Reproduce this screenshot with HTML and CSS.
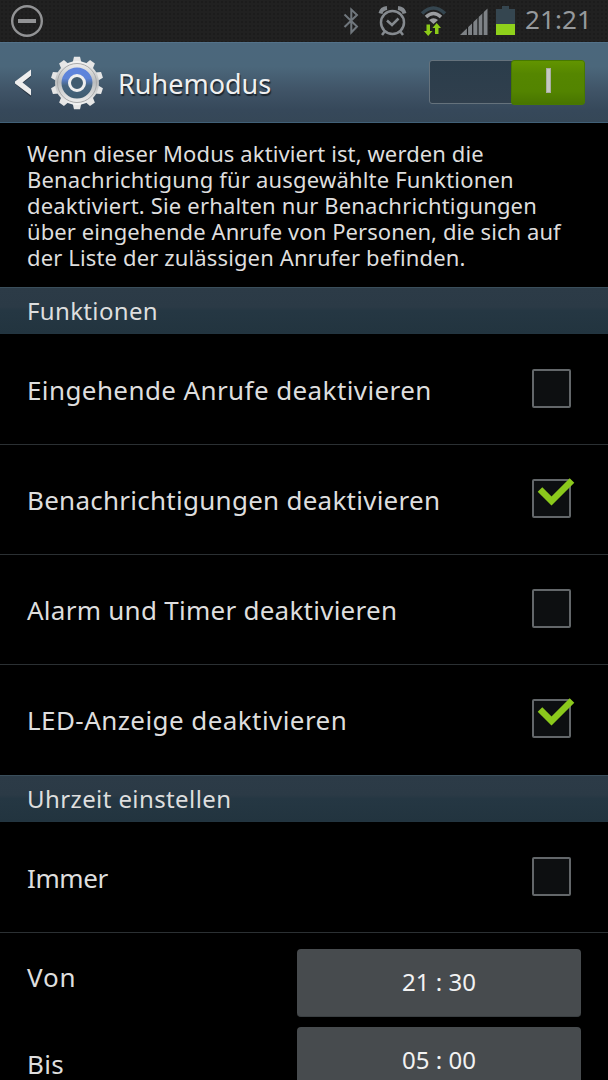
FILE: index.html
```html
<!DOCTYPE html>
<html lang="de">
<head>
<meta charset="utf-8">
<title>Ruhemodus</title>
<link rel="stylesheet" href="styles.css">
</head>
<body>
<div class="screen">
  <div class="status">
    <svg class="quiet" width="34" height="34" viewBox="0 0 34 34"><circle cx="17" cy="17" r="14.8" fill="none" stroke="#929395" stroke-width="2.4"/><path d="M8 17h18" stroke="#929395" stroke-width="4"/></svg>
    <svg class="indicators" width="190" height="42" viewBox="334 0 190 42">
      <path d="M344.500 14.500L357 26.500L351.300 32.500V9.500L357 15L344.500 27" fill="none" stroke="#70777d" stroke-width="2"/>
      <g fill="none" stroke="#858a8f" stroke-width="2.500">
        <circle cx="392.500" cy="22.500" r="11.500"/><path d="M387 20.500l5 4.500 6.500-6.500M385 31l-3 4M400 31l3 4"/>
        <path d="M380.500 13.500q1-5 6.500-5.500M398 8q5.500.5 6.500 5.500" stroke-width="4"/>
      </g>
      <path d="M422 13.500Q433.500 2.500 445 13.500" fill="none" stroke="#354650" stroke-width="3.500"/>
      <path d="M426 17Q433.500 10 441 17" fill="none" stroke="#9b9da0" stroke-width="3.500"/>
      <path d="M429 20Q433.500 16.500 438 20L433.500 24Z" fill="#9b9da0"/>
      <path d="M426.500 24.500h3.500V31h2.500l-4.300 5-4.300-5h2.600zM435 34h3.500v-6h2.500l-4.300-5-4.300 5h2.600z" fill="#8ccb18"/>
      <path d="M460 35L487.500 8.500V35Z" fill="#7e8286"/>
      <path d="M467.500 27V35M472.700 22V35M478 17V35M483 12V35" stroke="#151617" stroke-width="1.200"/>
      <path d="M496 9h6V6h7v3h6v15h-19z" fill="#354650"/><path d="M496 24h19v11h-19z" fill="#8fd11b"/>
    </svg>
    <span class="clock">21:21</span>
  </div>
  <header class="bar">
    <svg class="back" width="18" height="28" viewBox="0 0 18 28"><path d="M16 2.500V8L7 14.500L16 21.500V28L0 15V13.500Z" fill="#151d24" opacity=".6"/><path d="M16 .5V6.800L7.500 13.500L16 20.200V26.500L0 14.500V12.500Z" fill="#eee"/></svg>
    <svg class="gear" width="54" height="56" viewBox="-27 -28 54 56">
      <defs>
        <linearGradient id="steel" x2="0" y2="1"><stop stop-color="#f4f4f4"/><stop offset=".48" stop-color="#bbbdbe"/><stop offset="1" stop-color="#f3f3f3"/></linearGradient>
        <linearGradient id="blue" x2="0" y2="1"><stop stop-color="#5e84df"/><stop offset=".35" stop-color="#5e84d8"/><stop offset=".58" stop-color="#476580"/><stop offset="1" stop-color="#3f5c70"/></linearGradient>
        <path id="tooth" d="M-4.500-20L-3-26.300H3L4.500-20Z"/>
      </defs>
      <g fill="#e6e6e6">
        <use href="#tooth"/><use href="#tooth" transform="rotate(36)"/><use href="#tooth" transform="rotate(72)"/><use href="#tooth" transform="rotate(108)"/><use href="#tooth" transform="rotate(144)"/><use href="#tooth" transform="rotate(180)"/><use href="#tooth" transform="rotate(216)"/><use href="#tooth" transform="rotate(252)"/><use href="#tooth" transform="rotate(288)"/><use href="#tooth" transform="rotate(324)"/>
      </g>
      <circle r="22" fill="url(#steel)"/><circle r="19.500" fill="none" stroke="#a9aaab" stroke-width="1"/>
      <circle r="15.500" fill="url(#blue)"/><circle r="7.500" fill="#415c70" stroke="#eee" stroke-width="3"/>
    </svg>
    <h1 class="title"><span>Ruhemodus</span></h1>
    <div class="switch"><div class="thumb"><i></i></div></div>
  </header>
  <p class="intro">
    <span class="l1">Wenn dieser Modus aktiviert ist, werden die</span>
    <span class="l2">Benachrichtigung für ausgewählte Funktionen</span>
    <span class="l3">deaktiviert. Sie erhalten nur Benachrichtigungen</span>
    <span class="l4">über eingehende Anrufe von Personen, die sich auf</span>
    <span class="l5">der Liste der zulässigen Anrufer befinden.</span>
  </p>
  <h2 class="section"><span class="functions">Funktionen</span></h2>
  <div class="row"><span class="calls">Eingehende Anrufe deaktivieren</span><div class="box"></div></div>
  <div class="row"><span class="notes">Benachrichtigungen deaktivieren</span><div class="box"><svg class="tick" width="44" height="32" viewBox="0 0 44 32"><path d="M8 12.500L19.500 24L40 3.500" fill="none" stroke="#8bc91c" stroke-width="6.500"/></svg></div></div>
  <div class="row"><span class="alarm">Alarm und Timer deaktivieren</span><div class="box"></div></div>
  <div class="row last"><span class="led">LED-Anzeige deaktivieren</span><div class="box"><svg class="tick" width="44" height="32" viewBox="0 0 44 32"><path d="M8 12.500L19.500 24L40 3.500" fill="none" stroke="#8bc91c" stroke-width="6.500"/></svg></div></div>
  <h2 class="section"><span class="times">Uhrzeit einstellen</span></h2>
  <div class="row"><span class="always">Immer</span><div class="box"></div></div>
  <div class="schedule">
    <div class="labels"><span class="from">Von</span><span class="to">Bis</span></div>
    <div class="buttons"><div class="time">21 : 30</div><div class="time">05 : 00</div></div>
  </div>
</div>
</body>
</html>
```
FILE: styles.css
```css
* { box-sizing: border-box; }
body { margin: 0; background: #000; }
.screen {
  width: 608px; height: 1080px; overflow: hidden; background: #000; color: #dedede;
  font-family: "Noto Sans", "Open Sans", sans-serif; white-space: nowrap;
}
.status {
  height: 42px; display: flex; align-items: center; padding: 0 14px 0 10px;
  background: radial-gradient(circle, #1a1a1a .6px, transparent 1px) 0 0 / 4px 4px, #212121;
}
.indicators { margin-left: 290px; flex: none; }
.clock { padding-left: 1px; font-size: 26px; line-height: 38px; height: 42px; color: #96999c; letter-spacing: .1px; }
.bar {
  height: 81px; display: flex; align-items: center; padding-left: 15px;
  border-top: 1px solid #53728a; border-bottom: 1px solid #416077;
  background: linear-gradient(#4b677c 0%, #4b677b 30%, #405467 60%, #36485a 85%, #354757);
}
.back { flex: none; margin-right: 8px; width: 18px; }
.gear { flex: none; margin-left: 9px; }
.title { margin: 0 0 0 14px; padding-top: 2px; width: 311px; font-size: 27px; line-height: 36px; font-weight: 400; color: #f0f0f0; text-shadow: 1px 2px 1px #1b252e; }
.switch {
  width: 156px; height: 44px; margin-bottom: 2px; border: 1px solid #65727c; border-radius: 3px;
  display: flex; justify-content: flex-end; background: linear-gradient(#2b3d4b, #303f4d);
}
.thumb {
  width: 74px; height: 45px; margin: -1px -1px 0 0; border-radius: 3px; border: 1px solid #477900;
  display: flex; justify-content: center; padding-top: 7px;
  background: linear-gradient(#629400, #558600 30%, #538400 70%, #487500);
}
.thumb i { width: 5px; height: 25px; background: #c6c8c3; border: 1px solid #aaaea4; }
.intro { margin: 0; height: 164px; padding: 17px 27px 0; font-size: 22px; line-height: 26px; }
.intro span { display: block; }
.l1 { letter-spacing: .11px; }
.l2 { letter-spacing: .18px; }
.l3 { letter-spacing: .17px; }
.l4 { letter-spacing: .08px; }
.l5 { letter-spacing: .14px; }
.section {
  margin: 0; height: 47px; border-top: 1px solid #3a4e5b; border-bottom: 1px solid #233540; padding-left: 27px;
  font-size: 24px; line-height: 45px; font-weight: 400;
  background: linear-gradient(#2c3b47 0%, #2b3a46 42%, #253743 50%, #22343f);
}
.functions { letter-spacing: .35px; }
.times { letter-spacing: .4px; }
.row {
  height: 110px; padding: 0 37px 2px 27px; display: flex; align-items: center;
  justify-content: space-between; font-size: 26px; line-height: 36px;
}
.row + .row, .row + .schedule { box-shadow: inset 0 1px #2b3033; }
.row.last { height: 111px; padding-bottom: 3px; }
.row > span { padding-top: 3px; }
.calls { letter-spacing: .4px; }
.notes { letter-spacing: .26px; }
.alarm { letter-spacing: .26px; }
.led { letter-spacing: .43px; }
.always { letter-spacing: -.4px; }
.from { letter-spacing: .8px; }
.to { letter-spacing: .3px; }
.box { position: relative; width: 39px; height: 39px; border: 2px solid #63676a; border-radius: 2px; background: #0d0f11; }
.tick { position: absolute; left: -2px; top: -4px; }
.schedule { height: 148px; display: flex; justify-content: space-between; padding: 17px 27px 0; font-size: 26px; line-height: 36px; }
.labels { display: flex; flex-direction: column; gap: 51px; padding-top: 10px; }
.buttons { display: flex; flex-direction: column; gap: 10px; }
.time {
  flex: none; width: 284px; height: 68px; border-radius: 4px; background: #474b4e; border-bottom: 1px solid #3a3f42;
  text-align: center; font-size: 24px; line-height: 66px; color: #f2f2f2;
}
```
